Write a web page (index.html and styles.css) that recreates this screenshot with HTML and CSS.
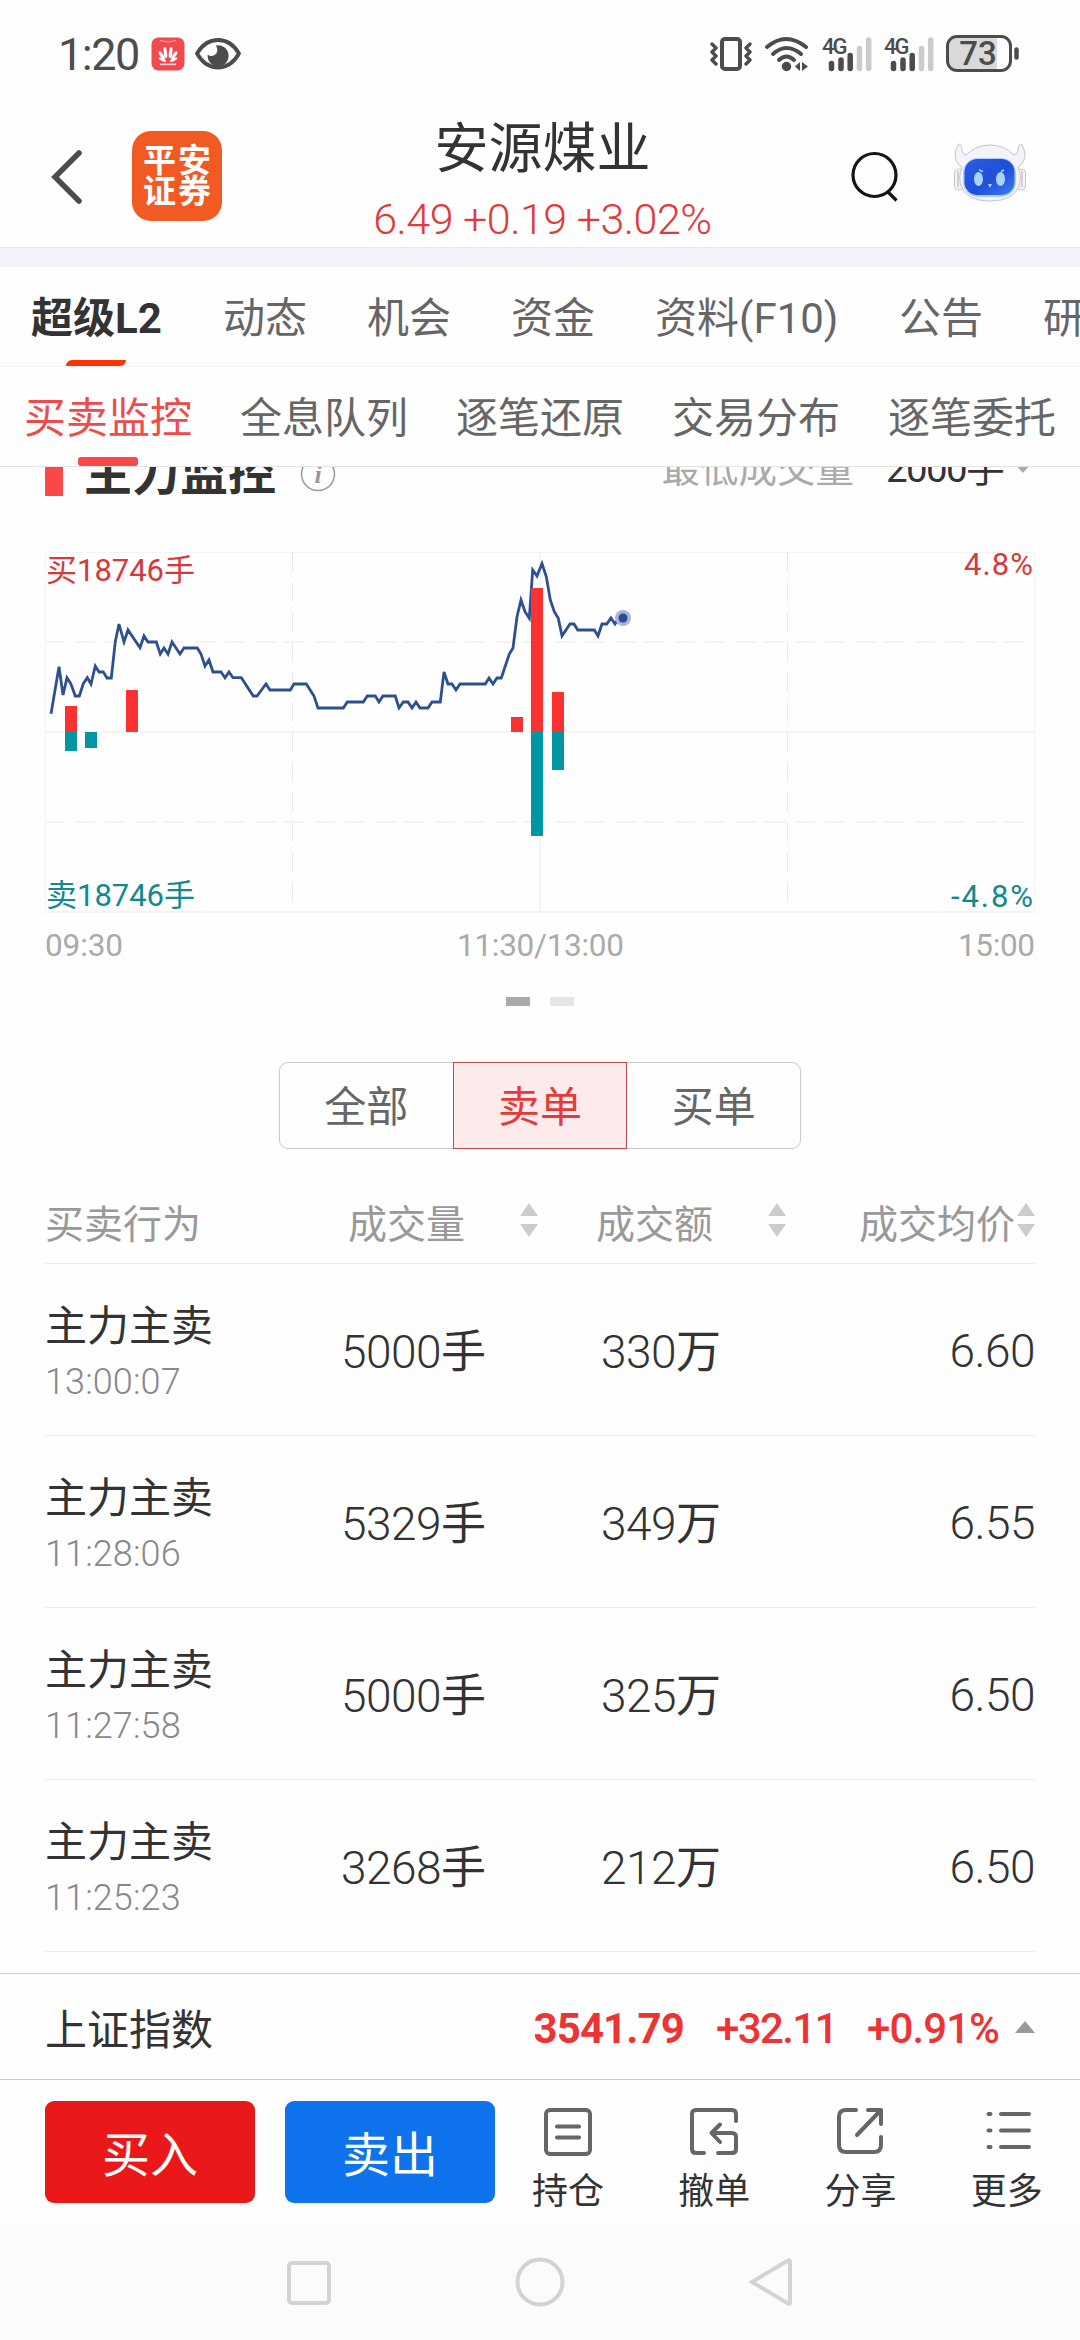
FILE: index.html
```html
<!DOCTYPE html>
<html lang="zh-CN">
<head>
  <meta charset="UTF-8">
  <title>安源煤业</title>
  <link rel="stylesheet" href="styles.css">
</head>
<body>

<div class="status-bar">
  <span class="clock">1:20</span>
  <svg class="app-badge" width="34" height="34" viewBox="0 0 34 34">
    <rect width="33" height="33" x="0.5" y="0.5" rx="7" fill="#f04a50"/>
    <path d="M9 3.5q8 3 16 0" fill="none" stroke="#ffb3b3" stroke-width="1"/>
    <g fill="#fff">
      <ellipse cx="15" cy="15.5" rx="1.7" ry="5.5" transform="rotate(-8 15 20)"/>
      <ellipse cx="19" cy="15.5" rx="1.7" ry="5.5" transform="rotate(8 19 20)"/>
      <ellipse cx="13.5" cy="17" rx="1.6" ry="5" transform="rotate(-35 14.5 22)"/>
      <ellipse cx="20.5" cy="17" rx="1.6" ry="5" transform="rotate(35 19.5 22)"/>
      <ellipse cx="12.5" cy="19.5" rx="1.3" ry="4" transform="rotate(-65 14.5 22)"/>
      <ellipse cx="21.5" cy="19.5" rx="1.3" ry="4" transform="rotate(65 19.5 22)"/>
      <path d="M9 26.5h16v1.7H9z" opacity="0.75"/>
    </g>
  </svg>
  <svg class="eye" width="46" height="34" viewBox="0 0 46 34">
    <path d="M2 16.5Q10 3 23 3t21 13.5Q36 30.5 23 30.5T2 16.5z" fill="none" stroke="#4c4c4c" stroke-width="3.8" stroke-linejoin="round"/>
    <path d="M21 8.5a10.5 10.5 0 1 1-8.300 9q3 2.800 7 .5 4.500-3 1.300-9.500z" fill="#4c4c4c"/>
  </svg>

  <div class="status-icons">
    <svg width="42" height="36" viewBox="0 0 42 36">
      <rect x="12" y="3" width="18" height="30" rx="3" fill="none" stroke="#4c4c4c" stroke-width="4"/>
      <path d="M2 8l4 4-4 4 4 4-4 4 4 4M40 8l-4 4 4 4-4 4 4 4-4 4" fill="none" stroke="#4c4c4c" stroke-width="3.4" stroke-linecap="round" stroke-linejoin="round"/>
    </svg>
    <svg width="46" height="36" viewBox="0 0 46 36">
      <g fill="none" stroke="#4c4c4c" stroke-width="4" stroke-linecap="round">
        <path d="M3 11Q22 -5 42 11"/>
        <path d="M9 18q13.500-12 28 0"/>
        <path d="M15 24q7.500-7 15 0"/>
      </g>
      <circle cx="22.500" cy="30.500" r="4.700" fill="#4c4c4c"/>
      <path d="M31 30.500l5-4.500v9zM44 30.500l-6-4.500v9z" fill="#4c4c4c"/>
    </svg>
    <svg width="50" height="36" viewBox="0 0 50 36">
      <text x="0" y="18" class="net">4G</text>
      <g stroke="#4c4c4c" stroke-width="5.500" stroke-linecap="round">
        <path d="M9.500 27.500v5M19 24v8.500M28.200 19.500v13"/>
        <path d="M37.500 12.500v20M46.700 4v28.500" stroke="#cbcbcb"/>
      </g>
    </svg>
    <svg width="50" height="36" viewBox="0 0 50 36">
      <text x="0" y="18" class="net">4G</text>
      <g stroke="#4c4c4c" stroke-width="5.500" stroke-linecap="round">
        <path d="M9.500 27.500v5M19 24v8.500M28.200 19.500v13"/>
        <path d="M37.500 12.500v20M46.700 4v28.500" stroke="#cbcbcb"/>
      </g>
    </svg>
    <svg width="74" height="38" viewBox="0 0 74 38">
      <path d="M9 3h42v32H9q-6-1-6-8V10q0-6 6-7z" fill="#d9d9d9"/>
      <rect x="1.500" y="1.500" width="63" height="34" rx="9.500" fill="none" stroke="#4c4c4c" stroke-width="3"/>
      <path d="M70.500 14.500v8" stroke="#4c4c4c" stroke-width="4.500" stroke-linecap="round"/>
      <text x="32" y="30" text-anchor="middle" class="battery-num">73</text>
    </svg>
  </div>
</div>

<header class="header">
  <svg class="back" width="32" height="56" viewBox="0 0 32 56">
    <path d="M28 4L4 28l24 24" fill="none" stroke="#4c4c4c" stroke-width="5.500" stroke-linecap="round"/>
  </svg>
  <div class="logo">平安<br>证券</div>
  <div class="stock">
    <div class="stock-name">安源煤业</div>
    <div class="stock-quote">6.49 +0.19 +3.02%</div>
  </div>
  <svg class="search" width="48" height="52" viewBox="0 0 48 52">
    <circle cx="23.500" cy="24" r="21.500" fill="none" stroke="#151515" stroke-width="3.200"/>
    <path d="M37 41l8.500 8.500" stroke="#151515" stroke-width="3.200"/>
  </svg>
  <svg class="robot" width="74" height="62" viewBox="0 0 74 62">
    <defs>
      <linearGradient id="face" x1="0" y1="0" x2="1" y2="1">
        <stop offset="0" stop-color="#2a5ce0"/>
        <stop offset="0.550" stop-color="#1f4fd8"/>
        <stop offset="1" stop-color="#3f7df0"/>
      </linearGradient>
    </defs>
    <g fill="#f3f4f8" stroke="#c3c6cf" stroke-width="1">
      <rect x="1.500" y="27" width="9" height="21" rx="4"/>
      <rect x="63.500" y="27" width="9" height="21" rx="4"/>
      <path d="M6 2Q0 10 3 18q2 5 6 7Q5 34 8 44q5 15 29 15t29-15q3-10-1-19 4-2 6-7 3-8-3-16-3 0-3 7-1 3-4 4Q51 3 37 3T13 13q-3-1-4-4 0-7-3-7z"/>
    </g>
    <path d="M5 29v16M69 29v16" stroke="#dcbcbc" stroke-width="1.500"/>
    <rect x="10" y="16" width="53" height="39" rx="15" fill="#aecbfa"/>
    <rect x="11.500" y="17" width="50" height="36" rx="13" fill="url(#face)"/>
    <ellipse cx="25.500" cy="37" rx="4.500" ry="7" fill="#a9d2fb"/>
    <ellipse cx="47.500" cy="37" rx="4.500" ry="7" fill="#a9d2fb"/>
    <path d="M35 42h4l-2 4z" fill="#a9d2fb"/>
    <path d="M26 28l4 1.500M48 29.500l3-1.500" stroke="#a9d2fb" stroke-width="1.500"/>
  </svg>
</header>

<nav class="tabs">
  <a class="active">超级L2</a>
  <a>动态</a>
  <a>机会</a>
  <a>资金</a>
  <a class="wide">资料(F10)</a>
  <a>公告</a>
  <a>研报</a>
</nav>

<nav class="sub-tabs">
  <a class="active">买卖监控</a>
  <a>全息队列</a>
  <a>逐笔还原</a>
  <a>交易分布</a>
  <a>逐笔委托</a>
</nav>

<main class="content">
  <div class="section-title">
    <i class="mark"></i>
    <h2>主力监控</h2>
    <svg class="info" width="38" height="38" viewBox="0 0 38 38">
      <circle cx="19" cy="19" r="16.500" fill="none" stroke="#999" stroke-width="1.500"/>
      <text x="19" y="28" text-anchor="middle" class="info-i">i</text>
    </svg>
    <span class="min-label">最低成交量</span>
    <span class="min-value">2000手</span>
    <i class="arrow-down"></i>
  </div>

  <svg class="chart" width="1080" height="420" viewBox="0 546 1080 420">
    <g fill="none" stroke="#f4f4f4">
      <path d="M45 552.500H1035M45.500 552V912M1034.500 552V912" stroke-width="1"/>
      <path d="M45 732H1035M45 912H1035M540 552V912" stroke-width="2"/>
      <path d="M45 642H1035M45 822H1035" stroke-width="2" stroke-dasharray="20 10"/>
      <path d="M292.500 552V912M787.500 552V912" stroke="#e9e9e9" stroke-width="1" stroke-dasharray="20 10"/>
    </g>
    <polyline class="price-line" points="51,713.700 59,666.700 63,695 67,677.700 71,684 75.300,696 79.300,696 83.300,683.700 87.300,677.700 91,684 95.300,666 99,672 103.300,672 107,678 111.300,678 115.300,641.700 119,624 124,642 128,630 140,647.700 144,636 148,642 156.300,642 160.300,654 164,648 168,654 172,642 180,654 184,648 197.300,648 201,654 205,666 209,660 213,672 221,672 225,677.700 229,672 233,677.700 241.300,677.700 253.300,696 257,696 266,684 270,690 290.300,690 294,684 306.300,684 314,696 318,708 343.300,708 347.300,702 363.300,702 367.300,696 375.300,696 379,702 383,696 395.300,696 399,708 403.300,702 408,702 412,708 416,702 420,708 428,708 432,702 440.300,702 444,672 448,684 452,684 456,690 460,684 485.300,684 489,678 493,684 497,678 501.300,678 509.300,654 513,648 517,616.700 521,600 525,611.700 529.300,618.300 532.700,570 537,576 542,563.500 546.300,576.700 550.300,600 554.300,611.700 558.300,618.300 562,636 570,624 574,624 577.700,630 594.300,630 598,636 602,624 606.700,624 611,618 615,624 619,618 623,618"/>
    <circle cx="623" cy="618" r="8" fill="#a8b5d8"/>
    <circle cx="623" cy="618" r="4.500" fill="#2b4a94"/>
    <path fill="#fa3232" d="M65 706h12v26H65zM126 690h12v42h-12zM511 717h12v15h-12zM531 588h12v144h-12zM552 692h12v40h-12z"/>
    <path fill="#0097a3" d="M65 732h12v19H65zM85 732h12v16H85zM531 732h12v104h-12zM552 732h12v38h-12z"/>
    <g class="chart-label">
      <text x="46" y="581" class="red" textLength="149">买18746手</text>
      <text x="1033" y="575" class="red" text-anchor="end" textLength="69">4.8%</text>
      <text x="46" y="906" class="teal" textLength="149">卖18746手</text>
      <text x="1033" y="907" class="teal" text-anchor="end" textLength="82">-4.8%</text>
      <text x="45" y="956" textLength="78">09:30</text>
      <text x="457" y="956" textLength="167">11:30/13:00</text>
      <text x="958" y="956" textLength="77">15:00</text>
    </g>
  </svg>

  <div class="pager"><i class="on"></i><i></i></div>

  <div class="segment">
    <button>全部</button>
    <button class="on">卖单</button>
    <button>买单</button>
  </div>

  <div class="table">
    <div class="row head">
      <span>买卖行为</span>
      <span>成交量<i class="sort"></i></span>
      <span>成交额<i class="sort"></i></span>
      <span>成交均价<i class="sort"></i></span>
    </div>
    <div class="row">
      <div><p class="act">主力主卖</p><p class="time">13:00:07</p></div>
      <span>5000<em>手</em></span><span>330<em>万</em></span><span class="avg">6.60</span>
    </div>
    <div class="row">
      <div><p class="act">主力主卖</p><p class="time">11:28:06</p></div>
      <span>5329<em>手</em></span><span>349<em>万</em></span><span class="avg">6.55</span>
    </div>
    <div class="row">
      <div><p class="act">主力主卖</p><p class="time">11:27:58</p></div>
      <span>5000<em>手</em></span><span>325<em>万</em></span><span class="avg">6.50</span>
    </div>
    <div class="row">
      <div><p class="act">主力主卖</p><p class="time">11:25:23</p></div>
      <span>3268<em>手</em></span><span>212<em>万</em></span><span class="avg">6.50</span>
    </div>
  </div>
</main>

<div class="index-bar">
  <span class="index-name">上证指数</span>
  <b>3541.79</b>
  <span class="change">+32.11</span>
  <span class="percent">+0.91%</span>
  <i class="arrow-up"></i>
</div>

<div class="toolbar">
  <button class="buy">买入</button>
  <button class="sell">卖出</button>
  <div class="tool">
    <svg width="50" height="50" viewBox="0 0 50 50">
      <rect x="3" y="3" width="44" height="44" rx="4"/>
      <path d="M14 19.500h22M14 30.500h22"/>
    </svg>
    <span>持仓</span>
  </div>
  <div class="tool">
    <svg width="50" height="50" viewBox="0 0 50 50">
      <path d="M47 14V7q0-4-4-4H7Q3 3 3 7v35q0 4 4 4h8M29 46h14q4 0 4-4V30q0-4-4-4H23M31 17.500L22.500 26l8.500 9"/>
    </svg>
    <span>撤单</span>
  </div>
  <div class="tool">
    <svg width="50" height="50" viewBox="0 0 50 50">
      <path d="M20 3h-10Q3 3 3 10v28q0 7 7 7h28q7 0 7-7V30M32 3h13v14M44 4L21 28"/>
    </svg>
    <span>分享</span>
  </div>
  <div class="tool">
    <svg width="50" height="50" viewBox="0 0 50 50">
      <path d="M6.500 7h2M19 7h28M6.500 23.500h2M19 23.500h28M6.500 40h2M19 40h28"/>
    </svg>
    <span>更多</span>
  </div>
</div>

<div class="nav-bar">
  <svg width="48" height="52" viewBox="0 0 48 52"><rect x="4" y="7" width="40" height="40" rx="3"/></svg>
  <svg width="52" height="52" viewBox="0 0 52 52"><circle cx="26" cy="26" r="22.500"/></svg>
  <svg width="48" height="52" viewBox="0 0 48 52"><path d="M41 4.500L5 26l36 21.500q2 1 2-1v-41q0-2-2-1z"/></svg>
</div>

</body>
</html>
```

FILE: styles.css
```css
* {
  box-sizing: border-box;
}

body {
  margin: 0;
  width: 1080px;
  height: 2340px;
  overflow: hidden;
  display: flex;
  flex-direction: column;
  background: #fefefe;
  color: #333;
  font-family: Roboto, "Noto Sans CJK SC", sans-serif;
}

p, h2 {
  margin: 0;
}

svg {
  display: block;
  flex: none;
}

/* status bar */
.status-bar {
  height: 108px;
  display: flex;
  align-items: center;
  padding: 0 60px 0 58px;
  color: #4c4c4c;
}

.clock {
  width: 93px;
  font-size: 45px;
  letter-spacing: -1.5px;
}

.eye {
  margin-left: 10px;
}

.status-icons {
  margin-left: auto;
  display: flex;
  align-items: center;
  gap: 12px;
}

.net {
  font-size: 22px;
  font-weight: 500;
  fill: #4c4c4c;
  letter-spacing: -2px;
}

.battery-num {
  font-size: 33px;
  font-weight: 500;
  fill: #4c4c4c;
}

/* header */
.header {
  height: 140px;
  display: flex;
  align-items: center;
  padding: 0 53px 2px 51px;
  border-bottom: 1px solid #e8e8ec;
}

.logo {
  width: 90px;
  height: 90px;
  margin: 0 0 2px 49px;
  padding: 14px 0 0 2px;
  border-radius: 19px;
  background: #f15a22;
  color: #fff;
  font-size: 33px;
  font-weight: 700;
  line-height: 31px;
  letter-spacing: 2px;
  text-align: center;
}

.stock {
  width: 350px;
  margin: 0 134px 0 146px;
  text-align: center;
  white-space: nowrap;
}

.stock-name {
  font-size: 54px;
  line-height: 72px;
}

.stock-quote {
  font-size: 43px;
  line-height: 50px;
  margin: 8px 0 -5px;
  font-weight: 300;
  letter-spacing: -0.5px;
  color: #e03a3a;
}

.robot {
  margin: -8px 0 0 54px;
}

/* tabs */
.tabs {
  height: 119px;
  display: flex;
  gap: 60px;
  padding-left: 31px;
  border-top: 19px solid #f3f4f9;
  border-bottom: 1px solid #f1f1f1;
  font-size: 42px;
  line-height: 104px;
  color: #666;
  white-space: nowrap;
}

.tabs a, .sub-tabs a {
  position: relative;
  flex: none;
}

.tabs .active {
  width: 132px;
  color: #333;
  font-weight: 700;
}

.tabs .wide {
  width: 184px;
}

.tabs .active::after {
  content: "";
  position: absolute;
  left: 35px;
  bottom: 0;
  width: 60px;
  height: 6px;
  border-radius: 6px 0 6px 0;
  background: #ff3300;
}

.sub-tabs {
  height: 100px;
  display: flex;
  gap: 48px;
  padding-left: 24px;
  border-bottom: 1px solid #e3e3e3;
  font-size: 42px;
  line-height: 103px;
  color: #666;
  white-space: nowrap;
}

.sub-tabs .active {
  color: #f04a4a;
}

.sub-tabs .active::after {
  content: "";
  position: absolute;
  left: 54px;
  bottom: 0;
  width: 60px;
  height: 9px;
  border-radius: 3px;
  background: #fa4848;
}

/* scrolled content */
.content {
  flex: 1;
  min-height: 0;
  overflow: hidden;
}

.section-title {
  height: 60px;
  margin-top: -23px;
  display: flex;
  align-items: center;
  padding: 0 49px 0 45px;
  white-space: nowrap;
}

.mark {
  width: 18px;
  height: 43px;
  background: #fa4848;
}

.section-title h2 {
  margin-left: 21px;
  font-size: 48px;
  line-height: 60px;
}

.info {
  margin-left: 23px;
}

.info-i {
  font: italic 700 26px "Liberation Serif", serif;
  fill: #999;
}

.min-label, .min-value {
  margin-bottom: 10px;
  font-size: 38.5px;
  line-height: 48px;
}

.min-label {
  margin-left: auto;
  color: #aaa;
}

.min-value {
  width: 118px;
  margin-left: 32px;
  letter-spacing: -1.6px;
}

.arrow-down {
  margin: 0 0 11px 11px;
  border: 8px solid transparent;
  border-top: 9px solid #aaa;
  border-bottom: 0;
}

.chart {
  margin-top: 42px;
}

.price-line {
  fill: none;
  stroke: #2e4f90;
  stroke-width: 2.8;
}

.chart-label {
  font-size: 31.5px;
  fill: #aaa;
}

.chart-label .red {
  font-size: 31px;
  fill: #d8383a;
}

.chart-label .teal {
  font-size: 31px;
  fill: #12888f;
}

.pager {
  display: flex;
  justify-content: center;
  gap: 20px;
  margin-top: 31px;
}

.pager i {
  width: 24px;
  height: 9px;
  background: #e5e5e5;
}

.pager .on {
  background: #aaa;
}

.segment {
  width: 522px;
  height: 87px;
  margin: 56px auto 0;
  display: flex;
  border: 1px solid #c9c9c9;
  border-radius: 9px;
}

.segment button {
  flex: 1;
  padding: 0 0 4px;
  border: 0;
  background: none;
  color: #666;
  font: inherit;
  font-size: 42px;
}

.segment .on {
  margin: -1px 0;
  border: 1px solid #c0484a;
  background: #fdeaea;
  color: #e53a3a;
}

/* order table */
.table {
  margin: 33px 45px 0;
}

.row {
  height: 172px;
  display: grid;
  grid-template-columns: 296px 260px 1fr auto;
  align-items: center;
  border-bottom: 1px solid #ebebeb;
}

.row > span {
  padding-bottom: 2px;
  font-size: 46px;
  font-weight: 300;
  letter-spacing: -0.5px;
}

.row em {
  font-style: normal;
  font-weight: 400;
  font-size: 45px;
}

.row .avg {
  padding: 2px 0 0;
}

.row.head {
  height: 82px;
  grid-template-columns: 303px 248px 263px auto;
}

.row.head > span {
  display: flex;
  align-items: center;
  padding-bottom: 4px;
  font-size: 39px;
  font-weight: 400;
  letter-spacing: 0;
  color: #999;
}

.row.head > span:last-child .sort {
  margin-left: 2px;
}

.sort {
  width: 18px;
  height: 34px;
  margin: -1px 0 0 55px;
  display: flex;
  flex-direction: column;
  justify-content: space-between;
}

.sort::before, .sort::after {
  content: "";
  border: 9px solid transparent;
}

.sort::before {
  border-top: 0;
  border-bottom: 13px solid #ccc;
}

.sort::after {
  border-bottom: 0;
  border-top: 13px solid #ccc;
}

.act {
  padding-top: 5px;
  font-size: 42px;
  line-height: 60px;
}

.time {
  font-size: 36px;
  font-weight: 300;
  line-height: 50px;
  letter-spacing: 0.1px;
  color: #888;
}

/* index bar */
.index-bar {
  height: 107px;
  display: flex;
  align-items: center;
  padding: 0 45px;
  border-top: 1px solid #ccc;
  border-bottom: 1px solid #ccc;
  font-size: 42px;
  color: #ec3434;
}

.index-name {
  color: #333;
}

.index-bar b {
  margin-left: auto;
  letter-spacing: -0.9px;
}

.index-bar b, .change, .percent {
  padding-top: 3px;
}

.change {
  width: 116px;
  margin-left: 32px;
  font-weight: 500;
  letter-spacing: -1.6px;
}

.percent {
  width: 134px;
  margin-left: 35px;
  font-weight: 500;
  letter-spacing: -0.9px;
}

.arrow-up {
  margin-left: 14px;
  border: 10.5px solid transparent;
  border-top: 0;
  border-bottom: 12px solid #999;
}

/* bottom toolbar */
.toolbar {
  height: 144px;
  display: flex;
  align-items: center;
  padding-left: 45px;
}

.toolbar button {
  width: 210px;
  height: 102px;
  margin-right: 30px;
  padding: 0 0 3px;
  border: 0;
  border-radius: 9px;
  color: #fff;
  font: inherit;
  font-size: 48px;
}

.toolbar .buy {
  background: #eb1819;
}

.toolbar .sell {
  margin-right: 0;
  background: #0f73ee;
}

.tool {
  width: 146.3px;
  padding-top: 20px;
  display: flex;
  flex-direction: column;
  align-items: center;
}

.tool span {
  margin-top: 10px;
  font-size: 36px;
  line-height: 50px;
}

.tool svg {
  fill: none;
  stroke: #666;
  stroke-width: 4;
  stroke-linecap: round;
  stroke-linejoin: round;
}

/* system navigation */
.nav-bar {
  height: 116px;
  display: flex;
  align-items: center;
  justify-content: center;
  gap: 181px;
  background: #fbfbfb;
}

.nav-bar svg {
  fill: none;
  stroke: #d3d3d3;
  stroke-width: 4;
}
```
